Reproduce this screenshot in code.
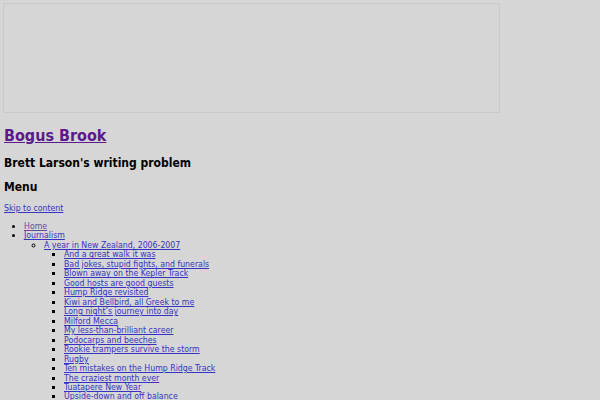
import React from "react";

const items = [
  "And a great walk it was",
  "Bad jokes, stupid fights, and funerals",
  "Blown away on the Kepler Track",
  "Good hosts are good guests",
  "Hump Ridge revisited",
  "Kiwi and Bellbird, all Greek to me",
  "Long night\u2019s journey into day",
  "Milford Mecca",
  "My less-than-brilliant career",
  "Podocarps and beeches",
  "Rookie trampers survive the storm",
  "Rugby",
  "Ten mistakes on the Hump Ridge Track",
  "The craziest month ever",
  "Tuatapere New Year",
  "Upside-down and off balance",
  "Where the wild things are",
];

export default function App() {
  return (
    <div className="h-[400px] w-[600px] overflow-hidden bg-[#d6d6d6] pl-[4px] pt-[3px]" style={{ fontFamily: "'DejaVu Sans Condensed', 'DejaVu Sans', sans-serif" }}>
      <div className="h-[110px] w-[497px] -ml-[1px] border border-[#c9c9c9]" />
      <h1 className="mt-[13px] text-[16px] font-bold leading-[20px]">
        <a href="#" className="text-[#5a1a8b] underline">Bogus Brook</a>
      </h1>
      <h2 className="mt-[10px] text-[12px] font-bold leading-[15px] text-black">Brett Larson's writing problem</h2>
      <h2 className="mt-[9px] text-[12px] font-bold leading-[15px] text-black">Menu</h2>
      <div className="mt-[8px] text-[8.7px] leading-[11px]">
        <a href="#" className="text-[#3434c0] underline">Skip to content</a>
        <ul className="mt-[8px] list-disc pl-[20px] leading-[9.47px]">
          <li><a href="#" className="text-[#6a4a9a] underline">Home</a></li>
          <li>
            <a href="#" className="text-[#3434c0] underline">Journalism</a>
            <ul className="list-[circle] pl-[20px]">
              <li>
                <a href="#" className="text-[#3434c0] underline">A year in New Zealand, 2006-2007</a>
                <ul className="list-[square] pl-[20px]">
                  {items.map((t) => (
                    <li key={t}><a href="#" className="text-[#3434c0] underline">{t}</a></li>
                  ))}
                </ul>
              </li>
            </ul>
          </li>
        </ul>
      </div>
    </div>
  );
}
